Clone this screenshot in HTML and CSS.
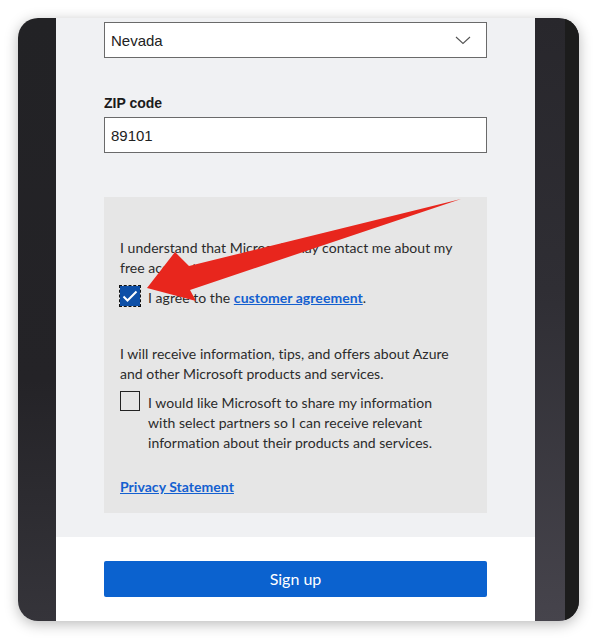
FILE: index.html
```html
<!DOCTYPE html>
<html lang="en">
<head>
<meta charset="utf-8">
<title>Sign up</title>
<link rel="stylesheet" href="styles.css">
</head>
<body>
<div class="frame">
  <div class="side-left"></div>
  <div class="page">
    <div class="form">
      <div class="select">
        <span>Nevada</span>
        <svg class="chev" width="16" height="10" viewBox="0 0 16 10"><polyline points="1,2 8,8.5 15,2" fill="none" stroke="#555" stroke-width="1.1"/></svg>
      </div>
      <label class="label">ZIP code</label>
      <div class="input">89101</div>
      <div class="consent">
        <p class="para">I understand that Microsoft may contact me about my free account.</p>
        <div class="check-row">
          <span class="box checked">
            <svg width="20" height="20" viewBox="0 0 20 20"><polyline points="3.5,10.5 7.5,14.5 16.5,5.5" fill="none" stroke="#fff" stroke-width="2"/></svg>
          </span>
          <span class="check-text">I agree to the <a class="link" href="#">customer agreement</a>.</span>
        </div>
        <p class="para second">I will receive information, tips, and offers about Azure and other Microsoft products and services.</p>
        <div class="check-row row2">
          <span class="box"></span>
          <span class="check-text">I would like Microsoft to share my information with select partners so I can receive relevant information about their products and services.</span>
        </div>
        <a class="link privacy" href="#">Privacy Statement</a>
      </div>
    </div>
    <div class="footer">
      <button class="btn">Sign up</button>
    </div>
  </div>
  <div class="side-right"><div class="band"></div></div>
</div>
<svg class="arrow" width="597" height="639" viewBox="0 0 597 639">
  <polygon points="461,199 189,266 175,252 147,288 196,301 190,290" fill="#e8261d"/>
</svg>
</body>
</html>
```

FILE: styles.css
```css
html, body {
  margin: 0;
  padding: 0;
  background: #ffffff;
}
body {
  width: 597px;
  height: 639px;
  position: relative;
  overflow: hidden;
}
.frame {
  position: absolute;
  left: 18px;
  top: 18px;
  width: 561px;
  height: 603px;
  border-radius: 20px;
  overflow: hidden;
  display: flex;
  box-shadow: 0 3px 14px rgba(0, 0, 0, 0.28);
}
.side-left {
  width: 38px;
  background: linear-gradient(#222225, #242327 60%, #35343a);
}
.side-right {
  width: 44px;
  display: flex;
  justify-content: flex-end;
  background: linear-gradient(#28272c, #2f2e34 45%, #46444c);
}
.side-right .band {
  width: 14px;
  background: #1c1c1c;
}
.page {
  width: 479px;
  display: flex;
  flex-direction: column;
}
.form {
  background: #f0f1f3;
  height: 519px;
  box-sizing: border-box;
  padding: 4px 48px 0 48px;
  display: flex;
  flex-direction: column;
}
.select, .input {
  height: 36px;
  box-sizing: border-box;
  border: 1px solid #6a6a6a;
  background: #fff;
  display: flex;
  align-items: center;
  padding: 0 6px;
  font-family: "Liberation Sans", Arial, sans-serif;
  font-size: 15px;
  color: #222;
}
.select {
  justify-content: space-between;
  padding-right: 15px;
}
.chev {
  display: block;
}
.label {
  margin-top: 35px;
  height: 20px;
  line-height: 20px;
  font-family: "Liberation Sans", Arial, sans-serif;
  font-weight: bold;
  font-size: 14px;
  color: #1b1b1b;
  margin-bottom: 4px;
}
.consent {
  margin-top: 44px;
  height: 316px;
  box-sizing: border-box;
  background: #e6e6e6;
  padding: 41px 16px 0 16px;
  font-family: Lato, sans-serif;
  font-size: 14px;
  letter-spacing: 0.04px;
  line-height: 20px;
  color: #2b2b2b;
}
.para {
  margin: 0;
}
.para.second {
  margin-top: 36px;
}
.check-row {
  display: flex;
  align-items: flex-start;
  margin-top: 10px;
  gap: 8px;
}
.check-row.row2 {
  margin-top: 9px;
}
.box {
  flex: none;
  width: 20px;
  height: 20px;
  box-sizing: border-box;
  border: 1px solid #222;
  margin-top: -2px;
}
.box svg {
  display: block;
  margin: -1px;
}
.box.checked {
  background: #0d4fa7;
  outline: 1px dashed #111;
  border-color: #0d4fa7;
}
.check-text {
  max-width: 298px;
}
.link {
  color: #1460d0;
  font-weight: 700;
  text-decoration: underline;
}
.privacy {
  display: inline-block;
  margin-top: 24px;
}
.footer {
  flex: 1;
  background: #fff;
  padding: 24px 48px 0 48px;
}
.btn {
  display: block;
  width: 100%;
  height: 36px;
  border: none;
  border-radius: 2px;
  background: #0b62cf;
  color: #fff;
  font-family: Lato, sans-serif;
  font-size: 16px;
  padding-bottom: 2px;
}
.arrow {
  position: absolute;
  left: 0;
  top: 0;
  pointer-events: none;
}
```
